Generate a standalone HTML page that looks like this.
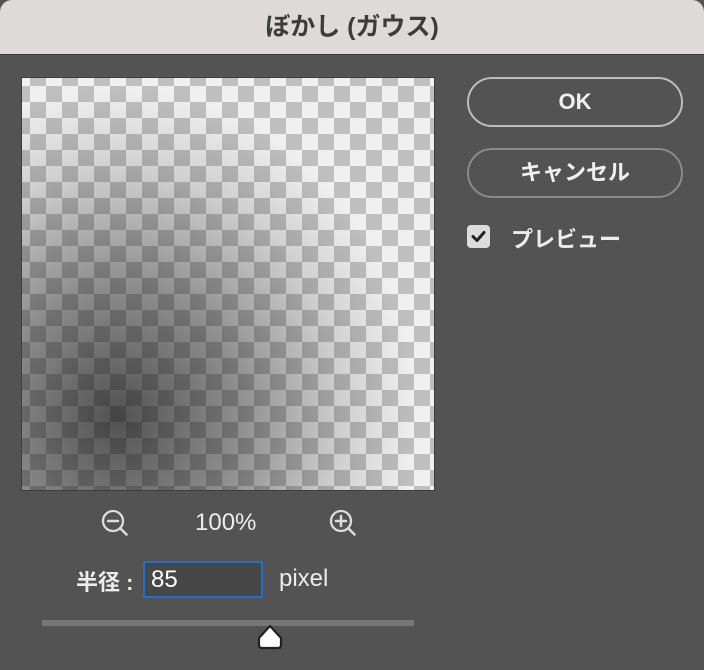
<!DOCTYPE html>
<html><head><meta charset="utf-8"><style>
*{margin:0;padding:0;box-sizing:border-box}
body{width:704px;height:670px;background:#535353;font-family:"Liberation Sans","Noto Sans CJK JP",sans-serif;position:relative;overflow:hidden}
.title{position:absolute;left:0;top:0;width:704px;height:55px;background:#dedad9;border-radius:12px 12px 0 0;border-bottom:1px solid #3a3a3a;text-align:center;line-height:54px;font-size:25px;font-weight:bold;color:#3c3c3c}
.prev{position:absolute;left:22px;top:78px;width:412px;height:412px;overflow:hidden;
background-color:#f0f0f0;
background-image:linear-gradient(45deg,#bfbfbf 25%,transparent 25%,transparent 75%,#bfbfbf 75%),linear-gradient(45deg,#bfbfbf 25%,transparent 25%,transparent 75%,#bfbfbf 75%);
background-size:32px 32px;background-position:-8px -8px,8px 8px;box-shadow:0 0 0 1px #3e3e3e}
.ov{position:absolute;inset:0;background:radial-gradient(ellipse 300px 330px at 95px 340px,rgba(20,20,20,.72) 0%,rgba(20,20,20,.45) 40%,rgba(20,20,20,.15) 75%,rgba(20,20,20,0) 100%)}
.btn{position:absolute;left:467px;width:216px;height:50px;border:2px solid #bdbdbd;border-radius:25px;color:#f0f0f0;font-size:22px;text-align:center;line-height:46px;font-weight:bold}
.btn2{border-color:#8a8a8a;top:148px}
.chk{position:absolute;left:467px;top:225px;width:23px;height:23px;background:#dcdcdc;border-radius:4px}
.lbl{position:absolute;color:#ececec;font-size:24px}
.inp{position:absolute;left:143px;top:561px;width:120px;height:37px;border:2px solid #1d6fd0;background:#474747;color:#fff;font-size:24px;padding-left:6px;line-height:33px}
.track{position:absolute;left:42px;top:620px;width:372px;height:6px;background:#777}
</style></head><body>
<div class="title">ぼかし (ガウス)</div>
<div class="prev"><div class="ov"></div></div>
<div class="btn" style="top:77px">OK</div>
<div class="btn btn2">キャンセル</div>
<div class="chk"><svg width="23" height="23" viewBox="0 0 23 23"><path d="M6 11.5l4 4 7-8" fill="none" stroke="#222" stroke-width="3" stroke-linecap="round" stroke-linejoin="round"/></svg></div>
<div class="lbl" style="left:511px;top:222px;font-weight:bold;font-size:22px">プレビュー</div>
<svg style="position:absolute;left:100px;top:508px" width="32" height="32" viewBox="0 0 32 32"><circle cx="13" cy="13" r="10" fill="none" stroke="#ddd" stroke-width="2.3"/><path d="M8 13h10M20.5 20.5l6 6" stroke="#ddd" stroke-width="2.5" stroke-linecap="round"/></svg>
<div class="lbl" style="left:195px;top:509px">100%</div>
<svg style="position:absolute;left:328px;top:508px" width="32" height="32" viewBox="0 0 32 32"><circle cx="13" cy="13" r="10" fill="none" stroke="#ddd" stroke-width="2.3"/><path d="M8 13h10M13 8v10M20.5 20.5l6 6" stroke="#ddd" stroke-width="2.5" stroke-linecap="round"/></svg>
<div class="lbl" style="left:76px;top:565px;font-weight:bold;font-size:22px">半径 :</div>
<div class="inp">85</div>
<div class="lbl" style="left:279px;top:565px">pixel</div>
<div class="track"></div>
<svg style="position:absolute;left:256px;top:624px" width="28" height="26" viewBox="0 0 28 26"><path d="M14 2L25 14V21Q25 24 22 24H6Q3 24 3 21V14Z" fill="#fff" stroke="#222" stroke-width="2.2" stroke-linejoin="round"/></svg>
</body></html>
